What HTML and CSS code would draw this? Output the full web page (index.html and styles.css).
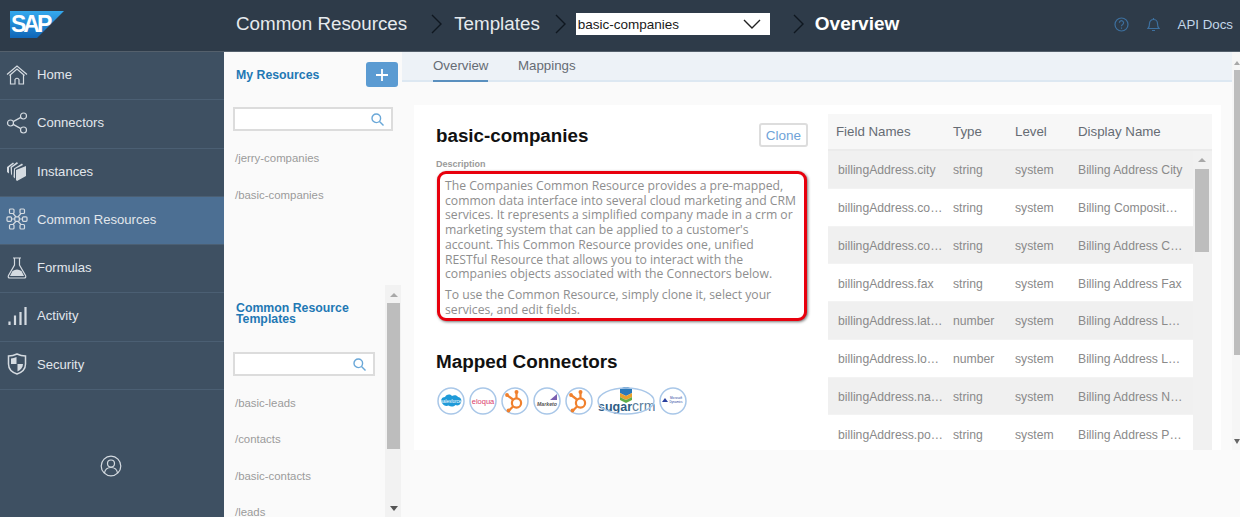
FILE: index.html
```html
<!DOCTYPE html>
<html lang="en">
<head>
<meta charset="utf-8">
<title>Common Resources</title>
<link rel="stylesheet" href="styles.css">
</head>
<body>
<header class="topbar">
  <div class="logo-cell">
    <svg class="logo" width="54" height="27" viewBox="0 0 54 27"><defs><linearGradient id="sapg" x1="0" y1="0" x2="0" y2="1"><stop offset="0" stop-color="#35a9ee"/><stop offset="1" stop-color="#0f66b8"/></linearGradient></defs><polygon points="0,0 54,0 27,27 0,27" fill="url(#sapg)"/><text x="1" y="21" class="logo-text">SAP</text></svg>
  </div>
  <div class="crumb crumb-first">Common Resources</div>
  <svg class="chev chev-a" width="11" height="20" viewBox="0 0 11 20"><path d="M1 1l9 9-9 9"/></svg>
  <div class="crumb">Templates</div>
  <svg class="chev chev-b" width="11" height="20" viewBox="0 0 11 20"><path d="M1 1l9 9-9 9"/></svg>
  <div class="select"><span>basic-companies</span><svg width="18" height="10" viewBox="0 0 18 10"><path d="M1 1l8 8 8-8"/></svg></div>
  <svg class="chev chev-c" width="11" height="20" viewBox="0 0 11 20"><path d="M1 1l9 9-9 9"/></svg>
  <div class="crumb crumb-current">Overview</div>
  <div class="top-actions">
    <svg class="top-icon" width="15" height="15" viewBox="0 0 15 15"><circle cx="7.5" cy="7.5" r="6.5"/><path d="M5.4 5.8a2.1 2.1 0 1 1 3.3 1.7c-.8.5-1.2 1-1.2 1.8M7.5 10.6v1.2"/></svg>
    <svg class="top-icon" width="13" height="15" viewBox="0 0 13 15"><path d="M1 11.5c1.3-1.2 1.5-2.5 1.5-5a4 4 0 0 1 8 0c0 2.5.2 3.8 1.500 5zM5 13.500h3M6.500 1v1.500"/></svg>
    <span class="api">API Docs</span>
  </div>
</header>

<div class="shell">
  <nav class="sidebar">
    <a class="nav-item"><svg width="22" height="20" viewBox="0 0 22 20"><path d="M1 9.500L11 1l10 8.500M3.500 10.500L11 4l7.500 6.500"/><path d="M4.500 10v9h4.500v-4.500q2-2.500 4 0V19h4.500v-9"/></svg><span>Home</span></a>
    <a class="nav-item"><svg width="22" height="22" viewBox="0 0 22 22"><circle cx="4.500" cy="11" r="3"/><circle cx="17.500" cy="4" r="3"/><circle cx="17.500" cy="18" r="3"/><path d="M7.200 9.600L14.800 5.400M7.200 12.400l7.600 4.200"/></svg><span>Connectors</span></a>
    <a class="nav-item"><svg width="22" height="20" viewBox="0 0 22 20"><path class="solid" d="M10 9l10-4v10l-9 5-1-1zM8 7.500l8-5 1 1.500-8 4v9.500l-1.500-1.500zM4.500 6l6.500-5 1 1.500-6 4v8L5 13zM1 6l6-4.500 1 1L3 6.500v6L1 11z"/></svg><span>Instances</span></a>
    <a class="nav-item active"><svg width="22" height="22" viewBox="0 0 22 22"><rect x="3.500" y="1" width="4.500" height="4.500" rx="1"/><rect x="14" y="1" width="4.500" height="4.500" rx="1"/><rect x="1" y="8.800" width="4.500" height="4.500" rx="1"/><rect x="8.800" y="8.800" width="4.500" height="4.500" rx="1"/><rect x="16.500" y="8.800" width="4.500" height="4.500" rx="1"/><rect x="3.500" y="16.500" width="4.500" height="4.500" rx="1"/><rect x="14" y="16.500" width="4.500" height="4.500" rx="1"/><path d="M5.500 11h3.300M13.300 11h3.200M7 5.500l3 3.300M15 5.500l-3 3.300M7 16.500l3-3.200M15 16.500l-3-3.200"/></svg><span>Common Resources</span></a>
    <a class="nav-item"><svg width="20" height="22" viewBox="0 0 20 22"><path d="M6 1h8M7.500 1v7L1.500 18.500Q.5 21 3 21h14q2.500 0 1.500-2.500L12.500 8V1"/><path class="solid" d="M5.500 14q4.500-3 9 0l2.500 5H3z"/></svg><span>Formulas</span></a>
    <a class="nav-item"><svg width="20" height="20" viewBox="0 0 20 20"><path class="thick" d="M2.500 19v-3.500M8 19V9.500M13.500 19V6M18.500 19V1"/></svg><span>Activity</span></a>
    <a class="nav-item"><svg width="20" height="22" viewBox="0 0 20 22"><path class="heavy" d="M10 1c3 1.500 5.500 2 8.500 2v8c0 5-4 8.500-8.500 10C5.500 19.500 1.500 16 1.500 11V3c3 0 5.500-.5 8.500-2z"/><path class="solid" d="M9.500 4c-2 1-3.500 1.200-5.500 1.400V11h5.500zM10.500 11v7.500c3-1.500 5.500-4 5.500-7.500z"/></svg><span>Security</span></a>
    <div class="user"><svg width="22" height="22" viewBox="0 0 22 22"><circle cx="11" cy="11" r="9.800"/><circle cx="11" cy="8.500" r="3.500"/><path d="M4.500 18c.5-3.500 3-5.500 6.500-5.500s6 2 6.500 5.500"/></svg></div>
  </nav>

  <aside class="panel">
    <section class="my">
      <div class="my-head"><h3 class="panel-title">My Resources</h3><button class="add"><svg width="12" height="12" viewBox="0 0 12 12"><path d="M6 0v12M0 6h12"/></svg></button></div>
      <div class="search search-my"><svg width="13" height="13" viewBox="0 0 13 13"><circle cx="5.300" cy="5.300" r="4.300"/><path d="M8.500 8.500l4 4"/></svg></div>
      <ul class="res-list"><li>/jerry-companies</li><li>/basic-companies</li></ul>
    </section>
    <section class="tpl">
      <div class="tpl-body">
        <h3 class="panel-title tpl-title">Common Resource Templates</h3>
        <div class="search search-tpl"><svg width="13" height="13" viewBox="0 0 13 13"><circle cx="5.300" cy="5.300" r="4.300"/><path d="M8.500 8.500l4 4"/></svg></div>
        <ul class="res-list tpl-list"><li>/basic-leads</li><li>/contacts</li><li>/basic-contacts</li><li>/leads</li></ul>
      </div>
      <div class="vbar vbar-tpl"><i class="up"></i><b></b><i class="down"></i></div>
    </section>
  </aside>

  <main class="main">
    <div class="content">
      <div class="tabs"><a class="tab on">Overview</a><a class="tab">Mappings</a></div>
      <div class="card">
        <div class="left">
          <div class="title-row"><h1>basic-companies</h1><button class="clone">Clone</button></div>
          <div class="desc-label">Description</div>
          <div class="desc">
            <p>The Companies Common Resource provides a pre-mapped, common data interface into several cloud marketing and CRM services. It represents a simplified company made in a crm or marketing system that can be applied to a customer's<br>account. This Common Resource provides one, unified<br>RESTful Resource that allows you to interact with the companies objects associated with the Connectors below.</p>
            <p>To use the Common Resource, simply clone it, select your services, and edit fields.</p>
          </div>
          <h2>Mapped Connectors</h2>
          <div class="connectors">
            <svg width="28" height="28" viewBox="0 0 28 28"><circle class="ring" cx="14" cy="14" r="13"/><path d="M5 16c-2-3 0-6 3-6 2-3 5-3 7-1 2-1.500 5-1 6 1 3 0 4.500 4 2.500 6.500-1 2-3.500 2.500-5 1.500-2 2-5 2-7 .5-2.500 1-5 0-6.500-2.500z" fill="#1f9ad8"/><text x="14" y="15.500" class="lg lg-sf">salesforce</text></svg>
            <svg width="28" height="28" viewBox="0 0 28 28"><circle class="ring" cx="14" cy="14" r="13"/><text x="14" y="17" class="lg lg-el">eloqua</text></svg>
            <svg width="28" height="28" viewBox="0 0 28 28"><circle class="ring" cx="14" cy="14" r="13"/><g class="hub"><circle cx="15.500" cy="16" r="4.600"/><path d="M15.500 11V6M12 19.500L7.500 24M12 12.500L6 8"/></g><circle class="hub-dot" cx="15.500" cy="5" r="2"/><circle class="hub-dot" cx="6" cy="8" r="1.900"/><circle class="hub-dot" cx="7.500" cy="23.500" r="1.900"/></svg>
            <svg width="28" height="28" viewBox="0 0 28 28"><circle class="ring" cx="14" cy="14" r="13"/><path d="M17 13l7-6v6z" fill="#7a5fb0"/><text x="14" y="19" class="lg lg-mk">Marketo</text></svg>
            <svg width="28" height="28" viewBox="0 0 28 28"><circle class="ring" cx="14" cy="14" r="13"/><g class="hub"><circle cx="15.500" cy="16" r="4.600"/><path d="M15.500 11V6M12 19.500L7.500 24M12 12.500L6 8"/></g><circle class="hub-dot" cx="15.500" cy="5" r="2"/><circle class="hub-dot" cx="6" cy="8" r="1.900"/><circle class="hub-dot" cx="7.500" cy="23.500" r="1.900"/></svg>
            <svg width="58" height="28" viewBox="0 0 58 28"><path d="M29 -1l6 3v4l-6 3-6-3V2z" fill="#2a78b8"/><path d="M23 6l6 3 6-3v4l-6 3-6-3z" fill="#e8a02c"/><path d="M23 10l6 3 6-3v3l-6 3-6-3z" fill="#62ad48"/><text x="1" y="24" class="lg-su">sugar<tspan class="lg-crm">crm</tspan></text><ellipse class="ring ring-open" cx="29" cy="14" rx="28" ry="13"/></svg>
            <svg width="28" height="28" viewBox="0 0 28 28"><circle class="ring" cx="14" cy="14" r="13"/><path d="M3 15l3-4 3 4z" fill="#2a3f9e"/><text x="17" y="12" class="lg lg-ms">Microsoft</text><text x="17" y="15.500" class="lg lg-ms">Dynamics</text></svg>
          </div>
        </div>
        <div class="fields">
          <div class="row head"><span>Field Names</span><span>Type</span><span>Level</span><span>Display Name</span></div>
          <div class="fields-body">
            <div class="rows">
              <div class="row"><span>billingAddress.city</span><span>string</span><span>system</span><span>Billing Address City</span></div>
              <div class="row"><span>billingAddress.co…</span><span>string</span><span>system</span><span>Billing Composit…</span></div>
              <div class="row"><span>billingAddress.co…</span><span>string</span><span>system</span><span>Billing Address C…</span></div>
              <div class="row"><span>billingAddress.fax</span><span>string</span><span>system</span><span>Billing Address Fax</span></div>
              <div class="row"><span>billingAddress.lat…</span><span>number</span><span>system</span><span>Billing Address L…</span></div>
              <div class="row"><span>billingAddress.lo…</span><span>number</span><span>system</span><span>Billing Address L…</span></div>
              <div class="row"><span>billingAddress.na…</span><span>string</span><span>system</span><span>Billing Address N…</span></div>
              <div class="row"><span>billingAddress.po…</span><span>string</span><span>system</span><span>Billing Address P…</span></div>
            </div>
            <div class="vbar vbar-table"><i class="up"></i><b></b></div>
          </div>
        </div>
      </div>
    </div>
    <div class="vbar vbar-main"><i class="up"></i><b></b><i class="down"></i></div>
  </main>
</div>
</body>
</html>
```
FILE: styles.css
```css
* { box-sizing: border-box; }
html, body { margin: 0; height: 517px; overflow: hidden; }
body { font-family: "Liberation Sans", Arial, sans-serif; background: #fafafa; }
h1, h2, h3, p, ul { margin: 0; padding: 0; }
ul { list-style: none; }
button { font-family: inherit; }

/* top bar */
.topbar { height: 52px; background: #2e3b49; display: flex; align-items: center; color: #e6eaee; border-bottom: 1px solid #54606c; }
.logo-cell { width: 236px; padding-left: 10px; display: flex; margin-top: -1px; }
.logo { display: block; margin-top: -2px; }
.logo-text { font: bold 23px "Liberation Sans", sans-serif; fill: #fff; letter-spacing: -3px; }
.crumb { font-size: 18.800px; margin-top: -3px; }
.crumb-current { font-weight: 700; color: #fff; font-size: 19px; }
.chev { flex: none; fill: none; stroke: #0f1720; stroke-width: 1.400; margin-top: -3px; }
.chev-a { margin: -3px 12px 0 24px; }
.chev-b { margin: -3px 10px 0 15px; }
.chev-c { margin: -3px 11px 0 23px; }
.select { width: 194px; height: 22px; background: #fff; color: #1a1a1a; font-size: 13.500px; display: flex; align-items: center; justify-content: space-between; padding: 0 9px 0 2px; margin-top: -3px; }
.select svg { fill: none; stroke: #222; stroke-width: 1.400; }
.top-actions { margin-left: auto; display: flex; align-items: center; padding-right: 7px; margin-top: -3px; }
.top-icon { fill: none; stroke: #3d709f; stroke-width: 1.200; margin-right: 18px; }
.api { font-size: 13.300px; color: #c3d7ea; }

.shell { display: flex; height: 465px; }

/* sidebar */
.sidebar { width: 224px; flex: none; background: #3e5062; display: flex; flex-direction: column; }
.nav-item { height: 48.250px; flex: none; display: flex; align-items: center; border-bottom: 1px solid #4b5f73; color: #e2e7ec; font-size: 13.100px; padding-bottom: 2px; }
.nav-item svg { width: 22px; margin-left: 6px; margin-right: 9px; fill: none; stroke: #d5dbe1; stroke-width: 1.200; flex: none; }
.nav-item .solid { fill: #d5dbe1; stroke: none; }
.nav-item .thick { stroke-width: 2.200; }
.nav-item .heavy { stroke-width: 1.500; }
.nav-item.active { background: #4c6f93; }
.user { display: flex; justify-content: center; padding-top: 65px; padding-right: 3px; }
.user svg { fill: none; stroke: #d5dbe1; stroke-width: 1.200; }

/* middle panel */
.panel { width: 179px; flex: none; background: #fafafa; display: flex; flex-direction: column; }
.panel-title { font-size: 12.300px; color: #1f78b4; font-weight: 700; line-height: 11px; }
.my { height: 233px; padding-left: 9px; }
.my-head { display: flex; justify-content: space-between; align-items: center; height: 25px; margin-top: 10px; padding-left: 3px; padding-right: 5px; }
.my-head .panel-title { margin-top: 2px; }
.add { width: 32px; height: 25px; background: #5b9bd2; border: 0; border-radius: 3px; display: flex; align-items: center; justify-content: center; padding: 0; }
.add svg { stroke: #fff; stroke-width: 1.800; fill: none; }
.search { height: 24px; background: #fff; border: 2px solid #dcdcdc; display: flex; justify-content: flex-end; align-items: center; padding-right: 7px; }
.search svg { fill: none; stroke: #69a7d8; stroke-width: 1.400; }
.search-my { width: 160px; margin-top: 20px; }
.res-list { padding-left: 2px; }
.res-list li { font-size: 11.400px; color: #9a9a9a; line-height: 14px; }
.my .res-list { padding-top: 13px; }
.my .res-list li { padding-top: 7px; margin-bottom: 15.500px; }
.tpl { flex: 1; display: flex; min-height: 0; overflow: hidden; }
.tpl-body { flex: 1; padding-left: 9px; }
.tpl-title { padding: 18px 0 0 3px; }
.search-tpl { width: 142px; margin-top: 27px; }
.tpl-list { padding-top: 20px; }
.tpl-list li { margin-bottom: 22.400px; }

/* scrollbars */
.vbar { background: #f2f2f2; display: flex; flex-direction: column; align-items: center; flex: none; }
.vbar b { display: block; background: #bdbdbd; width: 100%; }
.vbar i { display: block; width: 0; height: 0; border-left: 4px solid transparent; border-right: 4px solid transparent; }
.vbar .up { border-bottom: 4px solid #a8a8a8; }
.vbar .down { border-top: 5px solid #555; margin-top: auto; }
.vbar-tpl { width: 16px; padding: 8px 1px 6px 2px; margin-right: 2px; }
.vbar-tpl b { height: 146px; margin-top: 6px; }
.vbar-main { width: 8px; height: 398px; padding: 9px 0 6px 2px; background: #f6f6f6; }
.vbar-main b { height: 285px; margin-top: 5px; }
.vbar-main .up { border-left-width: 3px; border-right-width: 3px; }
.vbar-main .down { border-left-width: 3px; border-right-width: 3px; border-top-color: #666; }
.vbar-table { width: 19px; padding: 7px 3px 0 2px; height: 299px; background: #f1f1f1; }
.vbar-table b { height: 83px; margin-top: 7px; }

/* main */
.main { flex: 1; min-width: 0; display: flex; background: #fafafa; margin-left: -1px; }
.content { flex: 1; min-width: 0; }
.tabs { height: 30px; background: #edf2f7; border-bottom: 2px solid #dde8f2; display: flex; padding-left: 31px; gap: 29.500px; }
.tab { font-size: 13.300px; color: #666c74; height: 30px; padding-top: 6px; }
.tab.on { border-bottom: 2px solid #5a90bf; }
.card { margin: 23px 0 0 12px; width: 807px; height: 345px; background: #fff; display: flex; overflow: hidden; }
.left { width: 414px; flex: none; padding: 18px 20px 0 22px; }
.title-row { display: flex; justify-content: space-between; align-items: flex-start; height: 35px; }
h1 { font-size: 18.800px; font-weight: 700; color: #111; padding-top: 2px; line-height: 22px; }
.clone { width: 49px; height: 24px; background: #fff; border: 2px solid #ddd; border-radius: 3px; color: #6fa3d8; font-size: 13.500px; padding: 0; }
.desc-label { font-size: 9px; font-weight: 700; color: #9a9a9a; line-height: 12px; }
.desc { width: 370px; height: 150px; margin: 1px 0 0 1px; border: 3px solid #e8000d; border-radius: 9px; box-shadow: 1px 1px 3px rgba(0,0,0,.55); padding: 5px 0 0 5px; font-family: "Open Sans", sans-serif; font-size: 12.200px; line-height: 14.700px; color: #8e8e8e; overflow: hidden; background: #fff; }
.desc p { margin-bottom: 6.500px; }
h2 { font-size: 18.900px; font-weight: 700; color: #111; margin-top: 30px; line-height: 22px; }
.connectors { display: flex; gap: 4px; margin: 14px 0 0 1px; }
.connectors svg { flex: none; }
.ring { fill: #fff; stroke: #a9c7e8; stroke-width: 1.500; }
.ring-open { fill: none; }
.lg { font-family: "Liberation Sans", sans-serif; text-anchor: middle; }
.lg-sf { font-size: 4.500px; fill: #fff; }
.lg-el { font-size: 7.500px; fill: #d93a6c; }
.lg-mk { font-size: 5.200px; font-weight: 700; font-style: italic; fill: #555; }
.lg-su { font-family: "Liberation Sans", sans-serif; font-size: 12.500px; font-weight: 700; fill: #2f5d85; }
.lg-crm { font-weight: 400; fill: #5a7d9c; font-size: 14px; }
.lg-ms { font-size: 3px; fill: #2a3f9e; }
.hub { fill: none; stroke: #f0802d; stroke-width: 2.200; }
.hub-dot { fill: #f0802d; }

/* field table */
.fields { width: 384px; flex: none; margin-top: 9px; background: #f7f7f7; }
.row { display: grid; grid-template-columns: 125px 62px 63px 115px; height: 37.750px; align-items: center; font-size: 12.200px; color: #8a8a8a; border-bottom: 1px solid #f3f3f3; background: #fff; padding-top: 2px; }
.row span { white-space: nowrap; }
.row span:first-child { padding-left: 10px; }
.row.head { background: #f7f7f7; font-size: 13.300px; color: #666c74; height: 37px; border-bottom: 2px solid #ebebeb; padding: 0 0 1px; }
.row.head span:first-child { padding-left: 8px; }
.fields-body { display: flex; height: 299px; overflow: hidden; }
.rows { flex: 1; min-width: 0; }
.rows .row:nth-child(odd) { background: #f0f0f0; }
```
